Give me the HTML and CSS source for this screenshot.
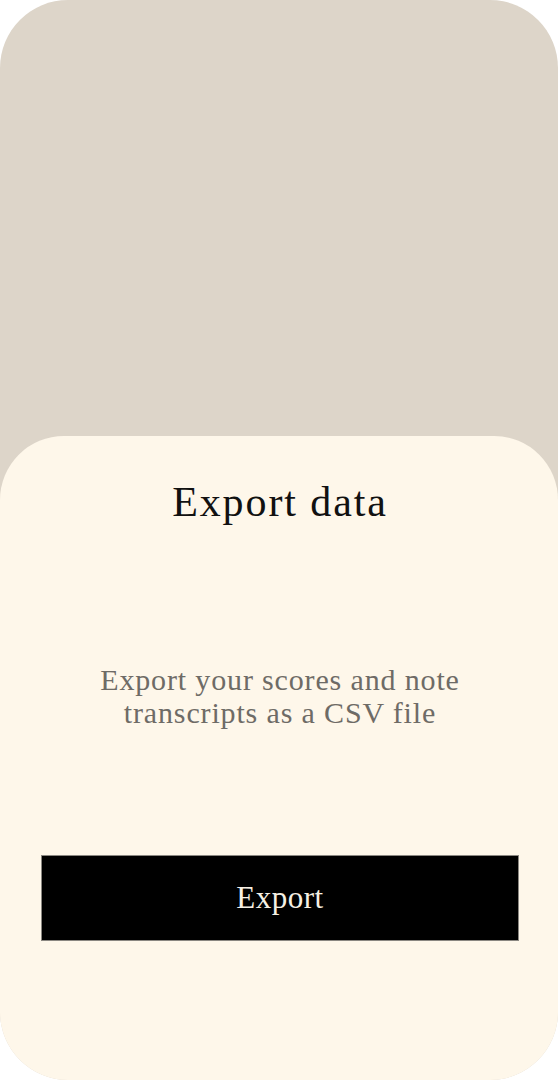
FILE: index.html
```html
<!DOCTYPE html>
<html lang="en">
<head>
<meta charset="utf-8">
<title>Export data</title>
<link rel="stylesheet" href="styles.css">
</head>
<body>
<div class="frame">
  <div class="backdrop"></div>
  <section class="sheet">
    <h1 class="title">Export data</h1>
    <p class="desc">Export your scores and note<br>transcripts as a CSV file</p>
    <button class="export-btn" type="button">Export</button>
  </section>
</div>
</body>
</html>
```
FILE: styles.css
```css
html, body {
  margin: 0;
  padding: 0;
  background: #ffffff;
}
body {
  font-family: "Liberation Serif", "Times New Roman", serif;
}
.frame {
  width: 558px;
  height: 1080px;
  border-radius: 68px;
  overflow: hidden;
  background: #ddd5c9;
  display: flex;
  flex-direction: column;
}
.backdrop {
  height: 436px;
  flex: none;
}
.sheet {
  flex: 1;
  background: #fef7ea;
  border-radius: 64px 64px 0 0;
  display: flex;
  flex-direction: column;
  align-items: center;
  padding: 38px 39px 0 41px;
}
.title {
  margin: 0;
  font-weight: 400;
  font-size: 42px;
  line-height: 56px;
  letter-spacing: 1.9px;
  color: #111111;
  text-align: center;
}
.desc {
  margin: 133px 0 0;
  font-size: 30px;
  line-height: 33px;
  letter-spacing: 0.85px;
  color: #6e6b66;
  text-align: center;
}
.export-btn {
  margin-top: 126px;
  width: 478px;
  height: 86px;
  background: #000000;
  border: 1px solid #8a8781;
  color: #f6f0e4;
  font-family: "Liberation Serif", "Times New Roman", serif;
  font-size: 31px;
  letter-spacing: 0.5px;
  padding: 0;
  cursor: pointer;
}
```
